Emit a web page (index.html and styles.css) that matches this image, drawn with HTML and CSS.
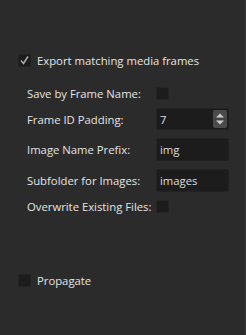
FILE: index.html
```html
<!DOCTYPE html>
<html lang="en">
<head>
    <meta charset="UTF-8">
    <meta name="viewport" content="width=device-width, initial-scale=1.0">
    <title>Export Settings</title>
    <link rel="stylesheet" href="styles.css">
</head>
<body>
    <div class="panel">
        <label class="check-row">
            <span class="box checked">
                <svg width="11" height="11" viewBox="0 0 11 11"><path d="M2 5.5 L4.5 8.5 L9 1.5" fill="none" stroke="#a8a8a8" stroke-width="1.6"/></svg>
            </span>
            <span>Export matching media frames</span>
        </label>

        <div class="form">
            <span class="label">Save by Frame Name:</span>
            <span class="field"><span class="box"></span></span>

            <span class="label">Frame ID Padding:</span>
            <span class="field">
                <span class="spin">
                    <span class="value">7</span>
                    <span class="arrows">
                        <svg width="14" height="18" viewBox="0 0 14 18">
                            <path d="M3 7.5 L7 3.5 L11 7.5 Z" fill="#c8c8c8"/>
                            <path d="M1 9 H13" stroke="#3a3a3a" stroke-width="1"/>
                            <path d="M3 10.5 L7 14.5 L11 10.5 Z" fill="#c8c8c8"/>
                        </svg>
                    </span>
                </span>
            </span>

            <span class="label">Image Name Prefix:</span>
            <span class="field"><span class="input">img</span></span>

            <span class="label">Subfolder for Images:</span>
            <span class="field"><span class="input">images</span></span>

            <span class="label">Overwrite Existing Files:</span>
            <span class="field"><span class="box"></span></span>
        </div>

        <label class="check-row propagate">
            <span class="box"></span>
            <span>Propagate</span>
        </label>
    </div>
</body>
</html>
```

FILE: styles.css
```css
body {
  margin: 0;
  padding: 0;
  background: #2b2b2b;
  color: #e4e4e4;
  font-family: "Open Sans", sans-serif;
  font-size: 11.3px;
}
.panel {
  height: 335px;
  box-sizing: border-box;
  padding: 54px 0 0 18px;
  border-right: 1px solid #383838;
}
.check-row {
  display: flex;
  align-items: center;
  gap: 6px;
  height: 13px;
}
.box {
  width: 13px;
  height: 13px;
  box-sizing: border-box;
  background: #1c1c1c;
  border: 1px solid #242424;
  border-radius: 1px;
  display: flex;
  align-items: center;
  justify-content: center;
}
.form {
  display: grid;
  grid-template-columns: 129px 73px;
  grid-template-rows: 13px 22px 23px 23px 13px;
  row-gap: 8px;
  margin: 20px 0 0 9px;
}
.label {
  display: flex;
  align-items: center;
  white-space: nowrap;
}
.field {
  display: flex;
  align-items: center;
}
.input, .spin {
  width: 73px;
  height: 100%;
  box-sizing: border-box;
  background: #1c1c1c;
  border: 1px solid #222;
  border-radius: 2px;
  display: flex;
  align-items: center;
  padding-left: 3px;
  color: #dcdcdc;
}
.spin {
  padding-right: 1px;
  justify-content: space-between;
}
.arrows {
  width: 14px;
  height: 18px;
  background: #4a4a4a;
  border-radius: 2px;
  display: flex;
}
.propagate {
  margin-top: 61px;
}
```
